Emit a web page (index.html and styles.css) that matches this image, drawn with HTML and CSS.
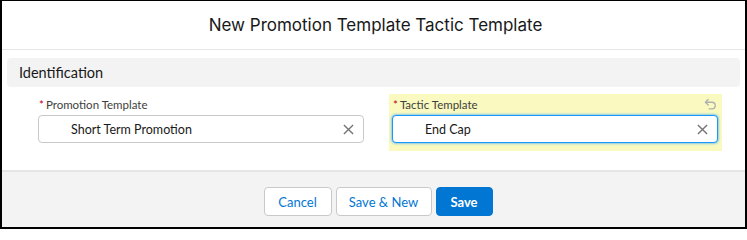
FILE: index.html
```html
<!DOCTYPE html>
<html>
<head>
<meta charset="utf-8">
<link rel="stylesheet" href="styles.css">
</head>
<body>
<div class="modal">
  <header class="modal-header">
    <h2 class="title">New Promotion Template Tactic Template</h2>
  </header>
  <div class="modal-body">
    <div class="section-title">Identification</div>
    <div class="fields">
      <div class="field">
        <div class="label-row"><label><abbr class="req">*</abbr>Promotion Template</label></div>
        <div class="input">
          <span class="value">Short Term Promotion</span>
          <svg class="clear" viewBox="0 0 12 12" width="11" height="11"><path d="M1 1 L11 11 M11 1 L1 11" stroke="#747474" stroke-width="1.5" fill="none"/></svg>
        </div>
      </div>
      <div class="field changed">
        <div class="label-row"><label><abbr class="req">*</abbr>Tactic Template</label>
          <svg class="undo" viewBox="0 0 14 14" width="13" height="13"><path d="M4.5 1.5 L1.5 4.5 L4.5 7.5 M1.8 4.5 H8.5 A3.6 3.6 0 0 1 8.5 11.7 H5.5" stroke="#b0b0b0" stroke-width="1.5" fill="none" stroke-linecap="round" stroke-linejoin="round"/></svg>
        </div>
        <div class="input focus">
          <span class="value">End Cap</span>
          <svg class="clear" viewBox="0 0 12 12" width="11" height="11"><path d="M1 1 L11 11 M11 1 L1 11" stroke="#747474" stroke-width="1.5" fill="none"/></svg>
        </div>
      </div>
    </div>
  </div>
  <footer class="modal-footer">
    <button class="btn neutral cancel">Cancel</button>
    <button class="btn neutral savenew">Save &amp; New</button>
    <button class="btn brand save">Save</button>
  </footer>
</div>
</body>
</html>
```

FILE: styles.css
```css
html, body {
  margin: 0;
  padding: 0;
  background: #fff;
}
body {
  font-family: "Lato", "Liberation Sans", sans-serif;
  color: #181818;
}
.modal {
  width: 747px;
  height: 229px;
  box-sizing: border-box;
  border: 2px solid #000;
  border-top-width: 1px;
  display: flex;
  flex-direction: column;
  overflow: hidden;
}
.modal-header {
  height: 48px;
  border-bottom: 1px solid #e5e5e5;
  display: flex;
  align-items: center;
  justify-content: center;
}
.title {
  margin: 0;
  font-family: "Inter", "Liberation Sans", sans-serif;
  font-size: 17px;
  font-weight: 400;
  color: #181818;
  padding-left: 4px;
}
.modal-body {
  height: 120px;
  padding-top: 8px;
  box-sizing: border-box;
}
.section-title {
  margin: 0 5px 0 5px;
  height: 29px;
  background: #f3f3f3;
  border-radius: 4px;
  font-size: 14.5px;
  line-height: 29px;
  padding-left: 12px;
  color: #181818;
}
.fields {
  display: grid;
  grid-template-columns: 333px 333px;
  column-gap: 21px;
  padding-left: 33px;
  margin-top: 7px;
}
.field {
  padding: 2px 4px 8px 3px;
}
.field.changed {
  background: #fafac0;
}
.label-row {
  height: 18px;
  margin-bottom: 1px;
  display: flex;
  align-items: center;
  justify-content: space-between;
}
label {
  font-size: 11.5px;
  color: #3e3e3c;
  line-height: 18px;
}
.req {
  color: #ba0517;
  text-decoration: none;
  margin-right: 2px;
  margin-left: 1px;
}
.undo {
  margin-right: 1px;
  margin-top: -2px;
}
.input {
  height: 28px;
  box-sizing: border-box;
  border: 1px solid #c9c9c9;
  border-radius: 4px;
  background: #fff;
  display: flex;
  align-items: center;
  justify-content: space-between;
  padding-left: 32px;
  padding-right: 9px;
}
.input.focus {
  border-color: #1b96ff;
  box-shadow: 0 0 3px #1b96ff;
}
.value {
  font-size: 12.5px;
  color: #181818;
}
.clear {
  display: block;
}
.modal-footer {
  flex: 1;
  background: #f3f3f3;
  border-top: 2px solid #e5e5e5;
  display: flex;
  justify-content: center;
  align-items: flex-start;
  padding-top: 15px;
  padding-left: 9px;
  gap: 4px;
}
.btn {
  height: 29px;
  box-sizing: border-box;
  border-radius: 4px;
  font-family: "Lato", "Liberation Sans", sans-serif;
  font-size: 13px;
  padding: 0;
  cursor: pointer;
}
.neutral {
  background: #fff;
  border: 1px solid #c9c9c9;
  color: #0176d3;
}
.brand {
  background: #0176d3;
  border: 1px solid #0176d3;
  color: #fff;
  font-weight: 700;
}
.cancel { width: 68px; }
.savenew { width: 96px; }
.save { width: 57px; }
```
